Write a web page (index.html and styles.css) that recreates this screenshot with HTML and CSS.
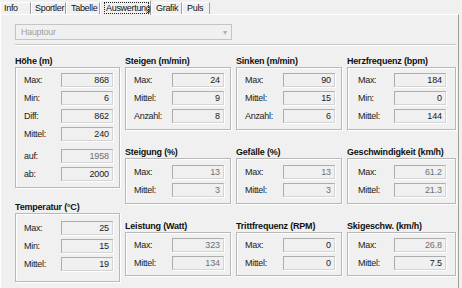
FILE: index.html
```html
<!DOCTYPE html>
<html lang="de">
<head>
  <meta charset="UTF-8" />
  <title>Auswertung</title>
  <link rel="stylesheet" href="styles.css">
</head>
<body>
  <div class="tabs">
    <div class="tab">Info</div>
    <div class="tab">Sportler</div>
    <div class="tab">Tabelle</div>
    <div class="tab active"><span class="focus">Auswertung</span></div>
    <div class="tab">Grafik</div>
    <div class="tab">Puls</div>
  </div>

  <div class="panel">
    <div class="combo">
      <span>Hauptour</span>
      <span class="arrow">&#9662;</span>
    </div>
    <div class="separator"></div>

    <div class="grid">
      <div class="col">
        <div class="group">
          <div class="title">Höhe (m)</div>
          <div class="box">
            <div class="row"><span>Max:</span><span class="field">868</span></div>
            <div class="row"><span>Min:</span><span class="field">6</span></div>
            <div class="row"><span>Diff:</span><span class="field">862</span></div>
            <div class="row"><span>Mittel:</span><span class="field">240</span></div>
            <div class="row space"><span>auf:</span><span class="field off">1958</span></div>
            <div class="row"><span>ab:</span><span class="field">2000</span></div>
          </div>
        </div>
        <div class="group temp">
          <div class="title">Temperatur (°C)</div>
          <div class="box">
            <div class="row"><span>Max:</span><span class="field">25</span></div>
            <div class="row"><span>Min:</span><span class="field">15</span></div>
            <div class="row"><span>Mittel:</span><span class="field">19</span></div>
          </div>
        </div>
      </div>

      <div class="col">
        <div class="group">
          <div class="title">Steigen (m/min)</div>
          <div class="box">
            <div class="row"><span>Max:</span><span class="field">24</span></div>
            <div class="row"><span>Mittel:</span><span class="field">9</span></div>
            <div class="row"><span>Anzahl:</span><span class="field">8</span></div>
          </div>
        </div>
        <div class="group second">
          <div class="title">Steigung (%)</div>
          <div class="box">
            <div class="row"><span>Max:</span><span class="field off">13</span></div>
            <div class="row"><span>Mittel:</span><span class="field off">3</span></div>
          </div>
        </div>
        <div class="group third">
          <div class="title">Leistung (Watt)</div>
          <div class="box">
            <div class="row"><span>Max:</span><span class="field off">323</span></div>
            <div class="row"><span>Mittel:</span><span class="field off">134</span></div>
          </div>
        </div>
      </div>

      <div class="col">
        <div class="group">
          <div class="title">Sinken (m/min)</div>
          <div class="box">
            <div class="row"><span>Max:</span><span class="field">90</span></div>
            <div class="row"><span>Mittel:</span><span class="field">15</span></div>
            <div class="row"><span>Anzahl:</span><span class="field">6</span></div>
          </div>
        </div>
        <div class="group second">
          <div class="title">Gefälle (%)</div>
          <div class="box">
            <div class="row"><span>Max:</span><span class="field off">13</span></div>
            <div class="row"><span>Mittel:</span><span class="field off">3</span></div>
          </div>
        </div>
        <div class="group third">
          <div class="title">Trittfrequenz (RPM)</div>
          <div class="box">
            <div class="row"><span>Max:</span><span class="field">0</span></div>
            <div class="row"><span>Mittel:</span><span class="field">0</span></div>
          </div>
        </div>
      </div>

      <div class="col wide">
        <div class="group">
          <div class="title">Herzfrequenz (bpm)</div>
          <div class="box">
            <div class="row"><span>Max:</span><span class="field">184</span></div>
            <div class="row"><span>Min:</span><span class="field">0</span></div>
            <div class="row"><span>Mittel:</span><span class="field">144</span></div>
          </div>
        </div>
        <div class="group second">
          <div class="title">Geschwindigkeit (km/h)</div>
          <div class="box">
            <div class="row"><span>Max:</span><span class="field off">61.2</span></div>
            <div class="row"><span>Mittel:</span><span class="field off">21.3</span></div>
          </div>
        </div>
        <div class="group third">
          <div class="title">Skigeschw. (km/h)</div>
          <div class="box">
            <div class="row"><span>Max:</span><span class="field off">26.8</span></div>
            <div class="row"><span>Mittel:</span><span class="field">7.5</span></div>
          </div>
        </div>
      </div>
    </div>
  </div>
</body>
</html>
```

FILE: styles.css
```css
body {
  margin: 0;
  background-color: #f0f0f0;
  font-family: "Liberation Sans", Arial, sans-serif;
  font-size: 9px;
  letter-spacing: -0.3px;
  color: #111;
  width: 462px;
  height: 288px;
  overflow: hidden;
}

/* onglets */
.tabs {
  display: flex;
  height: 14px;
  align-items: flex-end;
  position: relative;
  z-index: 1;
}
.tab {
  height: 12px;
  line-height: 11px;
  padding: 0 0 0 4px;
  border-left: 1px solid #fff;
  border-top: 1px solid #fff;
  border-right: 1px solid #a0a0a0;
  box-sizing: border-box;
  white-space: nowrap;
}
.tab:nth-child(1) { width: 31px; padding-left: 3px; }
.tab:nth-child(2) { width: 35px; padding-left: 3px; }
.tab:nth-child(3) { width: 34px; }
.tab:nth-child(5) { width: 31px; }
.tab:nth-child(6) { width: 28px; }
.tab.active {
  width: 51px;
  height: 15px;
  margin-bottom: -1px;
  background-color: #f0f0f0;
  padding: 1px 1px 0 3px;
}
.focus {
  display: block;
  border: 1px dotted #222;
  line-height: 10px;
  padding: 0 1px;
}

/* panneau */
.panel {
  width: 459px;
  height: 274px;
  box-sizing: border-box;
  border-top: 1px solid #fff;
  border-left: 1px solid #fff;
  border-right: 1px solid #a0a0a0;
  padding: 9px 0 0 14px;
}
.combo {
  width: 217px;
  height: 16px;
  box-sizing: border-box;
  border: 1px solid #c4c4c4;
  display: flex;
  justify-content: space-between;
  align-items: center;
  padding: 0 4px 0 5px;
  color: #a2a2a2;
}
.arrow {
  font-size: 8px;
  color: #b0b0b0;
}
.separator {
  width: 441px;
  margin-top: 4px;
  border-top: 1px solid #c8c8c8;
  border-bottom: 1px solid #fff;
}

/* groupes */
.grid {
  display: grid;
  grid-template-columns: 105px 106px 106px 109px;
  column-gap: 5px;
  margin-top: 9px;
  align-items: start;
}
.col {
  display: flex;
  flex-direction: column;
}
.title {
  font-weight: bold;
  letter-spacing: -0.2px;
  line-height: 12px;
  height: 12px;
  white-space: nowrap;
  color: #111;
}
.box {
  border: 1px solid #b8b8b8;
  box-shadow: inset 1px 1px 0 #fff, 1px 1px 0 #fff;
  padding: 5px 6px 6px 8px;
  display: flex;
  flex-direction: column;
  gap: 4px;
}
.wide .box {
  padding-right: 9px;
  padding-left: 10px;
}
.row {
  display: flex;
  justify-content: space-between;
  align-items: center;
  height: 14px;
  color: #222;
}
.row.space {
  margin-top: 4px;
}
.field {
  width: 52px;
  height: 14px;
  box-sizing: border-box;
  border: 1px solid #adadad;
  border-right-color: #d4d4d4;
  border-bottom-color: #d4d4d4;
  box-shadow: 1px 1px 0 #fff;
  text-align: right;
  line-height: 12px;
  letter-spacing: -0.1px;
  padding-right: 3px;
  color: #1a1a1a;
}
.field.off {
  color: #707070;
}
.second {
  margin-top: 16px;
}
.second .box {
  padding-top: 6px;
}
.third {
  margin-top: 16px;
}
.third .box {
  padding-bottom: 5px;
}
.temp {
  margin-top: 13px;
}
.temp .box {
  padding-top: 7px;
  padding-bottom: 10px;
}
```
